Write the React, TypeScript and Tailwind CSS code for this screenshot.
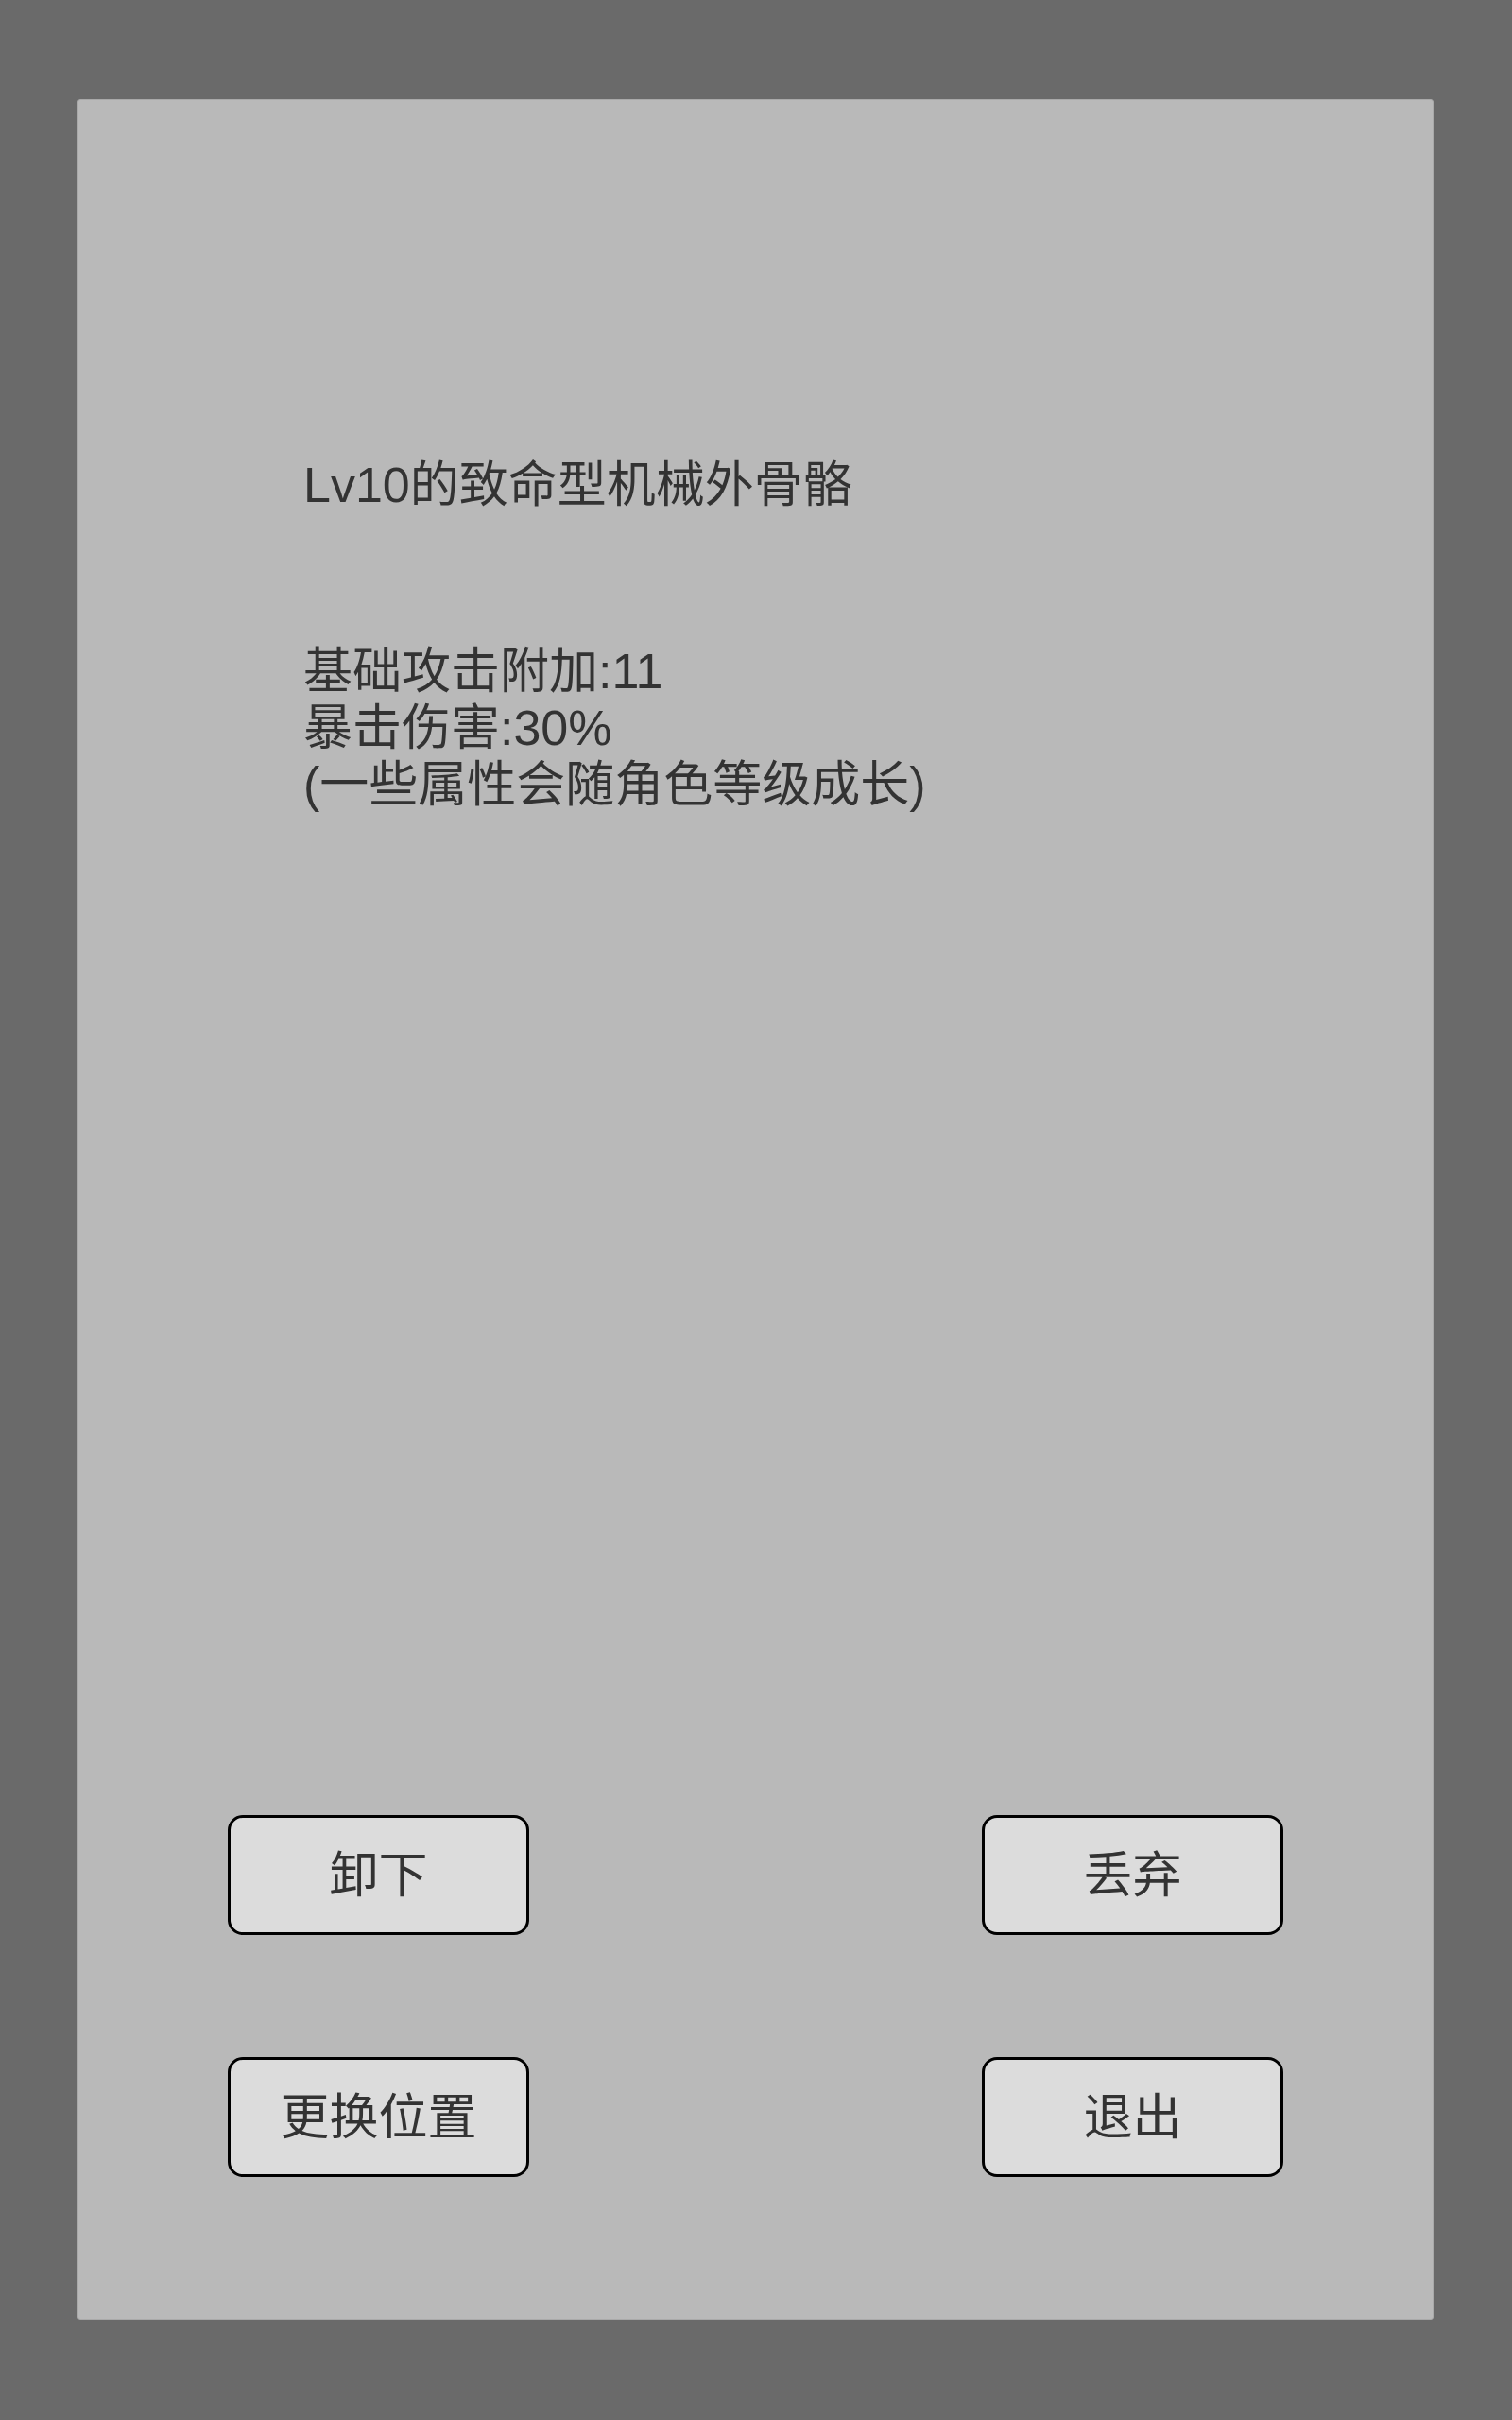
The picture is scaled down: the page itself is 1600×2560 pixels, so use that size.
const font = { fontFamily: '"Liberation Sans", "Noto Sans CJK SC", sans-serif' };

function ActionButton({ label }: { label: string }) {
  return (
    <button className="flex h-[127px] w-[319px] items-center justify-center rounded-[16px] border-[3px] border-black bg-[#dcdcdc] text-[52px] text-[#333333]">
      {label}
    </button>
  );
}

export default function App() {
  return (
    <div className="h-[2560px] w-[1600px] bg-[#6a6a6a] pl-[82px] pt-[105px]" style={font}>
      <div className="flex h-[2349px] w-[1435px] flex-col rounded-[3px] border border-[#a9a9a9] bg-[#b9b9b9] text-[#333333]">
        {/* Item name */}
        <div className="pl-[238px] pt-[377px] text-[52px] leading-[60px]">Lv10的致命型机械外骨骼</div>

        {/* Stats */}
        <div className="mt-[137px] pl-[238px] text-[52px] leading-[60px]">
          <div>基础攻击附加:11</div>
          <div>暴击伤害:30%</div>
          <div>(一些属性会随角色等级成长)</div>
        </div>

        {/* Actions */}
        <div className="mt-auto grid grid-cols-2 gap-y-[129px] px-[158px] pb-[150px]">
          <div className="flex justify-start">
            <ActionButton label="卸下" />
          </div>
          <div className="flex justify-end">
            <ActionButton label="丢弃" />
          </div>
          <div className="flex justify-start">
            <ActionButton label="更换位置" />
          </div>
          <div className="flex justify-end">
            <ActionButton label="退出" />
          </div>
        </div>
      </div>
    </div>
  );
}
